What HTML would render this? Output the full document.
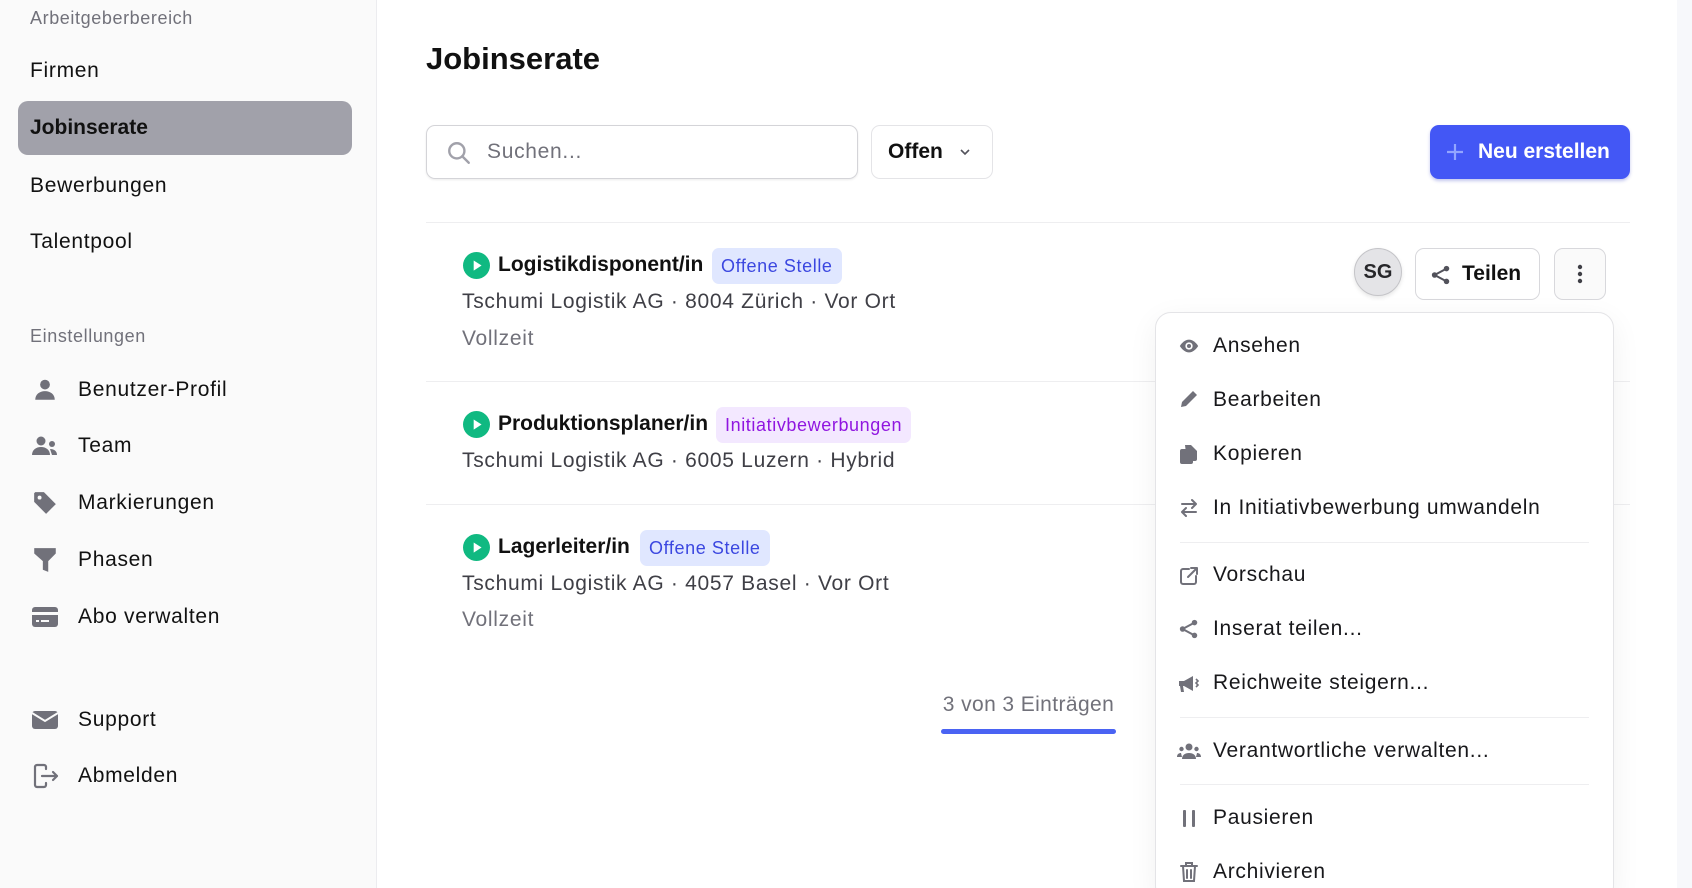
<!DOCTYPE html>
<html style="overflow:hidden;height:888px"><head><meta charset="utf-8"><style>
*{margin:0;padding:0;box-sizing:border-box}
body{width:1692px;height:888px;overflow:hidden;background:#fff;font-family:"Liberation Sans",Arial,sans-serif;position:relative;color:#111}
.a{position:absolute;white-space:nowrap}
.t{position:absolute;white-space:nowrap;line-height:30px;height:30px;letter-spacing:0.7px}
.b{font-weight:bold;letter-spacing:0}
.side{position:absolute;left:0;top:0;width:377px;height:888px;background:#fafafa;border-right:1px solid #ececef}
.nav{font-size:21px;color:#111;left:30px}
.sn{font-size:21px;color:#111;left:78px}
.ic{position:absolute}
.hr{position:absolute;height:1px;background:#eeeef0}
.badge{position:absolute;height:36px;line-height:36px;padding:0 9px;border-radius:7px;font-size:18px;letter-spacing:0.6px}
.mi{font-size:21px;color:#18181b;left:1213px}
.lbl{left:30px;font-size:18px;color:#71717a;letter-spacing:0.6px}
</style></head><body>
<div class="side"></div>
<div style="position:absolute;left:1677px;top:0;width:15px;height:888px;background:#f7f8fb"></div>

<div class="t lbl" style="top:3px">Arbeitgeberbereich</div>
<div class="t nav" style="top:56px">Firmen</div>
<div class="a" style="left:18px;top:101px;width:334px;height:54px;background:#a1a1aa;border-radius:10px"></div>
<div class="t nav b" style="top:113px">Jobinserate</div>
<div class="t nav" style="top:171px">Bewerbungen</div>
<div class="t nav" style="top:227px">Talentpool</div>
<div class="t lbl" style="top:321px">Einstellungen</div>

<svg class="ic" style="left:32px;top:377px" width="26" height="26" viewBox="0 0 24 24" fill="#71717a"><circle cx="12" cy="7" r="4.5"/><path d="M3 21c0-5 4-8 9-8s9 3 9 8z"/></svg>
<div class="t sn" style="top:375px">Benutzer-Profil</div>
<svg class="ic" style="left:31px;top:433px" width="28" height="26" viewBox="0 0 28 24" fill="#71717a"><circle cx="10" cy="7" r="4.5"/><path d="M1 21c0-5 4-8 9-8s9 3 9 8z"/><circle cx="21" cy="10" r="3"/><path d="M19 15c4 0 7 2 7 6h-5z"/></svg>
<div class="t sn" style="top:431px">Team</div>
<svg class="ic" style="left:32px;top:490px" width="26" height="26" viewBox="0 0 24 24" fill="#71717a"><path d="M2 3v8l11 11 9-9L11 2H3z"/><circle cx="7" cy="7" r="1.8" fill="#fafafa"/></svg>
<div class="t sn" style="top:488px">Markierungen</div>
<svg class="ic" style="left:32px;top:546px" width="26" height="28" viewBox="0 0 24 26" fill="#71717a"><path d="M2 2h20v5l-7 7v10l-5-2v-8L2 7z"/></svg>
<div class="t sn" style="top:545px">Phasen</div>
<svg class="ic" style="left:31px;top:605px" width="28" height="24" viewBox="0 0 28 24" fill="#71717a"><rect x="1" y="2" width="26" height="20" rx="3"/><rect x="1" y="7" width="26" height="3" fill="#fafafa"/><rect x="5" y="15" width="3" height="2" fill="#fafafa"/><rect x="10" y="15" width="8" height="2" fill="#fafafa"/></svg>
<div class="t sn" style="top:602px">Abo verwalten</div>
<svg class="ic" style="left:31px;top:708px" width="28" height="24" viewBox="0 0 28 24" fill="#71717a"><rect x="1" y="3" width="26" height="18" rx="3"/><path d="M1 5l13 8 13-8" stroke="#fafafa" stroke-width="2" fill="none"/></svg>
<div class="t sn" style="top:705px">Support</div>
<svg class="ic" style="left:32px;top:763px" width="28" height="26" viewBox="0 0 28 26" fill="none" stroke="#71717a" stroke-width="2.2" stroke-linecap="round" stroke-linejoin="round"><path d="M14 6V4a2 2 0 0 0-2-2H5a2 2 0 0 0-2 2v18a2 2 0 0 0 2 2h7a2 2 0 0 0 2-2v-2"/><path d="M10 13h15M21 9l4 4-4 4"/></svg>
<div class="t sn" style="top:761px">Abmelden</div>

<div class="a" style="left:426px;top:40px;font-size:31px;font-weight:bold;line-height:38px">Jobinserate</div>

<div class="a" style="left:426px;top:125px;width:432px;height:54px;border:1px solid #d4d4d8;border-radius:9px;box-shadow:0 1px 2px rgba(0,0,0,.08)"></div>
<svg class="ic" style="left:446px;top:140px" width="26" height="26" viewBox="0 0 24 24" fill="none" stroke="#a1a1aa" stroke-width="2.2" stroke-linecap="round"><circle cx="10" cy="10" r="7"/><path d="M15 15l6 6"/></svg>
<div class="t" style="left:487px;top:137px;font-size:21px;color:#71717a">Suchen...</div>
<div class="a" style="left:871px;top:125px;width:122px;height:54px;border:1px solid #e4e4e7;border-radius:9px"></div>
<div class="t b" style="left:888px;top:137px;font-size:21px">Offen</div>
<svg class="ic" style="left:958px;top:146px" width="14" height="12" viewBox="0 0 14 12" fill="none" stroke="#52525b" stroke-width="1.6"><path d="M3 4l4 4 4-4"/></svg>
<div class="a" style="left:1430px;top:125px;width:200px;height:54px;background:#4357f5;border-radius:9px;box-shadow:0 2px 3px rgba(60,70,200,.3)"></div>
<svg class="ic" style="left:1446px;top:143px" width="18" height="18" viewBox="0 0 18 18" stroke="#93a5ff" stroke-width="2.2"><path d="M9 1v16M1 9h16"/></svg>
<div class="t b" style="left:1478px;top:137px;font-size:21px;color:#fff">Neu erstellen</div>

<div class="hr" style="left:426px;top:222px;width:1204px"></div>
<div class="hr" style="left:426px;top:381px;width:1204px"></div>
<div class="hr" style="left:426px;top:504px;width:1204px"></div>

<svg class="ic" style="left:463px;top:252px" width="27" height="27" viewBox="0 0 24 24"><circle cx="12" cy="12" r="12" fill="#10b981"/><path d="M9.5 7.5v9l7-4.5z" fill="#fff"/></svg>
<div class="t b" style="left:498px;top:250px;font-size:21px">Logistikdisponent/in</div>
<div class="badge" style="left:712px;top:248px;background:#e0e7ff;color:#3b47e0">Offene Stelle</div>
<div class="t" style="left:462px;top:287px;font-size:21px;color:#3f3f46">Tschumi Logistik AG · 8004 Zürich · Vor Ort</div>
<div class="t" style="left:462px;top:324px;font-size:21px;color:#71717a">Vollzeit</div>

<svg class="ic" style="left:463px;top:411px" width="27" height="27" viewBox="0 0 24 24"><circle cx="12" cy="12" r="12" fill="#10b981"/><path d="M9.5 7.5v9l7-4.5z" fill="#fff"/></svg>
<div class="t b" style="left:498px;top:409px;font-size:21px">Produktionsplaner/in</div>
<div class="badge" style="left:716px;top:407px;background:#f3e8ff;color:#9016e0">Initiativbewerbungen</div>
<div class="t" style="left:462px;top:446px;font-size:21px;color:#3f3f46">Tschumi Logistik AG · 6005 Luzern · Hybrid</div>

<svg class="ic" style="left:463px;top:534px" width="27" height="27" viewBox="0 0 24 24"><circle cx="12" cy="12" r="12" fill="#10b981"/><path d="M9.5 7.5v9l7-4.5z" fill="#fff"/></svg>
<div class="t b" style="left:498px;top:532px;font-size:21px">Lagerleiter/in</div>
<div class="badge" style="left:640px;top:530px;background:#e0e7ff;color:#3b47e0">Offene Stelle</div>
<div class="t" style="left:462px;top:569px;font-size:21px;color:#3f3f46">Tschumi Logistik AG · 4057 Basel · Vor Ort</div>
<div class="t" style="left:462px;top:605px;font-size:21px;color:#71717a">Vollzeit</div>

<div class="t" style="left:931px;top:690px;width:195px;text-align:center;font-size:21px;color:#71717a;letter-spacing:0.4px">3 von 3 Einträgen</div>
<div class="a" style="left:941px;top:729px;width:175px;height:5px;border-radius:3px;background:#4a63f3"></div>

<div class="a" style="left:1354px;top:248px;width:48px;height:48px;border-radius:50%;background:#e4e4e7;border:1px solid #c4c4c8;box-shadow:0 2px 4px rgba(0,0,0,.1);text-align:center;line-height:46px;font-size:20px;font-weight:bold;color:#27272a">SG</div>
<div class="a" style="left:1415px;top:248px;width:125px;height:52px;border:1px solid #d8d8dc;border-radius:9px;background:#fff"></div>
<svg class="ic" style="left:1430px;top:264px" width="22" height="22" viewBox="0 0 24 24" fill="#52525b"><circle cx="18" cy="5" r="3"/><circle cx="5" cy="12" r="3"/><circle cx="18" cy="19" r="3"/><path d="M5 12L18 5M5 12l13 7" stroke="#52525b" stroke-width="2.2"/></svg>
<div class="t b" style="left:1462px;top:259px;font-size:21px">Teilen</div>
<div class="a" style="left:1554px;top:248px;width:52px;height:52px;border:1px solid #d8d8dc;border-radius:9px;background:#fafafa"></div>
<svg class="ic" style="left:1576px;top:264px" width="8" height="20" viewBox="0 0 8 20" fill="#3f3f46"><circle cx="4" cy="3" r="2.2"/><circle cx="4" cy="10" r="2.2"/><circle cx="4" cy="17" r="2.2"/></svg>

<div class="a" style="left:1155px;top:312px;width:459px;height:590px;background:#fff;border:1px solid #e4e4e7;border-radius:16px;box-shadow:0 8px 30px rgba(0,0,0,.06)"></div>
<svg class="ic" style="left:1178px;top:336px" width="22" height="20" viewBox="0 0 24 20" fill="#71717a"><path d="M12 3C6 3 2 10 2 10s4 7 10 7 10-7 10-7-4-7-10-7z"/><circle cx="12" cy="10" r="4" fill="#fff"/><circle cx="12" cy="10" r="2.2"/></svg>
<div class="t mi" style="top:331px">Ansehen</div>
<svg class="ic" style="left:1179px;top:389px" width="20" height="20" viewBox="0 0 20 20" fill="#71717a"><path d="M2 18l1-5L14 2l4 4L7 17z"/></svg>
<div class="t mi" style="top:385px">Bearbeiten</div>
<svg class="ic" style="left:1179px;top:443px" width="20" height="22" viewBox="0 0 20 22" fill="#71717a"><path d="M6 2h6l6 6v8a2 2 0 0 1-2 2H8z"/><rect x="1" y="6" width="13" height="15" rx="2"/></svg>
<div class="t mi" style="top:439px">Kopieren</div>
<svg class="ic" style="left:1178px;top:497px" width="22" height="22" viewBox="0 0 22 22" fill="none" stroke="#71717a" stroke-width="2" stroke-linecap="round" stroke-linejoin="round"><path d="M4 7h14M14 3l4 4-4 4M18 15H4M8 11l-4 4 4 4"/></svg>
<div class="t mi" style="top:493px">In Initiativbewerbung umwandeln</div>
<div class="hr" style="left:1180px;top:542px;width:409px"></div>
<svg class="ic" style="left:1178px;top:565px" width="22" height="22" viewBox="0 0 22 22" fill="none" stroke="#71717a" stroke-width="2" stroke-linecap="round" stroke-linejoin="round"><path d="M11 4H5a2 2 0 0 0-2 2v11a2 2 0 0 0 2 2h11a2 2 0 0 0 2-2v-6M13 3h6v6M19 3L10 12"/></svg>
<div class="t mi" style="top:560px">Vorschau</div>
<svg class="ic" style="left:1178px;top:618px" width="22" height="22" viewBox="0 0 24 24" fill="#71717a"><circle cx="18" cy="5" r="3"/><circle cx="5" cy="12" r="3"/><circle cx="18" cy="19" r="3"/><path d="M5 12L18 5M5 12l13 7" stroke="#71717a" stroke-width="2.2"/></svg>
<div class="t mi" style="top:614px">Inserat teilen...</div>
<svg class="ic" style="left:1177px;top:673px" width="24" height="22" viewBox="0 0 24 22" fill="#71717a"><path d="M2 8h5l9-5v15l-9-5H6l1 6H4l-1-6H2z"/><path d="M19 6l2 2-2 2 2 2-2 2" stroke="#71717a" stroke-width="1.6" fill="none"/></svg>
<div class="t mi" style="top:668px">Reichweite steigern...</div>
<div class="hr" style="left:1180px;top:717px;width:409px"></div>
<svg class="ic" style="left:1177px;top:741px" width="24" height="20" viewBox="0 0 24 20" fill="#71717a"><circle cx="12" cy="6" r="3.5"/><path d="M5 18c0-4 3-6 7-6s7 2 7 6z"/><circle cx="4.5" cy="8" r="2.2"/><circle cx="19.5" cy="8" r="2.2"/><path d="M0 16c0-3 2-4 4-4l1 4zM24 16c0-3-2-4-4-4l-1 4z"/></svg>
<div class="t mi" style="top:736px">Verantwortliche verwalten...</div>
<div class="hr" style="left:1180px;top:784px;width:409px"></div>
<svg class="ic" style="left:1180px;top:808px" width="18" height="20" viewBox="0 0 18 20" fill="#71717a"><rect x="3" y="2" width="3" height="17" rx="1"/><rect x="12" y="2" width="3" height="17" rx="1"/></svg>
<div class="t mi" style="top:803px">Pausieren</div>
<svg class="ic" style="left:1179px;top:861px" width="20" height="22" viewBox="0 0 20 22" fill="none" stroke="#71717a" stroke-width="2" stroke-linecap="round"><path d="M2 5h16M7 5V2h6v3M4 5l1 15h10l1-15M8 9v8M12 9v8"/></svg>
<div class="t mi" style="top:857px">Archivieren</div>
</body></html>
